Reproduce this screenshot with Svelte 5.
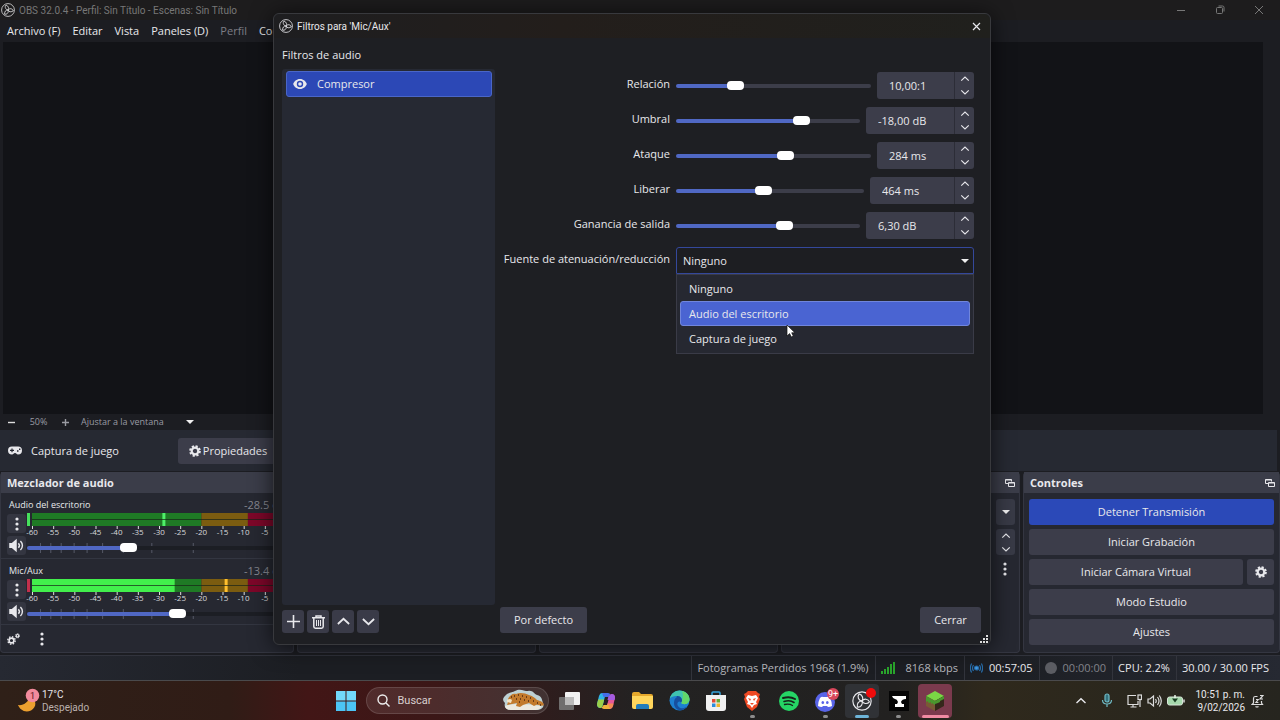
<script lang="ts">
	type Filter = { id: string; label: string; value: string; pos: number; spin: number };

	const menus = ['Archivo (F)', 'Editar', 'Vista', 'Paneles (D)', 'Perfil', 'Co'];

	let filters: Filter[] = $state([
		{ id: 'ratio', label: 'Relación', value: '10,00:1', pos: 28.7, spin: 97 },
		{ id: 'threshold', label: 'Umbral', value: '-18,00 dB', pos: 70, spin: 108 },
		{ id: 'attack', label: 'Ataque', value: '284 ms', pos: 56.7, spin: 97 },
		{ id: 'release', label: 'Liberar', value: '464 ms', pos: 46.3, spin: 104 },
		{ id: 'gain', label: 'Ganancia de salida', value: '6,30 dB', pos: 59.9, spin: 108 }
	]);

	const sources = ['Ninguno', 'Audio del escritorio', 'Captura de juego'];
	let hovered = $state(1);

	let channels = $state([
		{ name: 'Audio del escritorio', db: '-28.5 dB', level: -60, peak: -29.2, peakColor: '#4ff06a', clip: '#46e05c', volume: 38.3 },
		{ name: 'Mic/Aux', db: '-13.4 dB', level: -26.3, peak: -14.5, peakColor: '#ffc02e', clip: '#c2304c', volume: 58.5 }
	]);

	const marks = [-60, -55, -50, -45, -40, -35, -30, -25, -20, -15, -10, -5];
	const volumeMarks = [5, 9, 13, 18, 23, 29, 37, 48, 64];
	const pct = (db: number) => ((db + 60) / 60) * 100 + '%';
</script>

{#snippet obs(size: number)}
	<svg width={size} height={size} viewBox="0 0 24 24" fill="none" stroke="currentColor" stroke-width="1.400">
		<circle cx="12" cy="12" r="11" />
		{#each [0, 120, 240] as turn}
			<path transform="rotate({turn} 12 12)" d="M8.500 3.500C5.800 7 8 11.500 12 12c2-3.200.8-7-3.500-8.500" />
		{/each}
	</svg>
{/snippet}

{#snippet chevron(up: boolean, size: number, weight: number)}
	<svg width={size} height={size} viewBox="0 0 12 12" fill="none" stroke="currentColor" stroke-width={weight}>
		<path d={up ? 'M1.500 8 6 3.800 10.500 8' : 'M1.500 4 6 8.200 10.500 4'} />
	</svg>
{/snippet}

{#snippet gear(size: number)}
	<svg width={size} height={size} viewBox="0 0 16 16" fill="none" stroke="currentColor">
		<circle cx="8" cy="8" r="4.400" stroke-width="3" />
		<circle cx="8" cy="8" r="6.500" stroke-width="2.600" stroke-dasharray="2.900 2.205" />
	</svg>
{/snippet}

{#snippet kebab()}
	<svg width="4" height="14" viewBox="0 0 4 14" fill="currentColor">
		<circle cx="2" cy="2" r="1.600" /><circle cx="2" cy="7" r="1.600" /><circle cx="2" cy="12" r="1.600" />
	</svg>
{/snippet}

{#snippet popout()}
	<svg width="10" height="10" viewBox="0 0 10 10" fill="none" stroke="currentColor">
		<path d="M3 5.500H.5v-4h6v2M.5 2h6" /><path d="M3.500 4.500h6v4h-6zM3.500 5h6" />
	</svg>
{/snippet}

{#snippet speaker(size: number)}
	<svg width={size} height={size} viewBox="0 0 16 16" fill="none" stroke="currentColor" stroke-width="1.500">
		<path d="M1 6h2.500L7.500 2.500v11L3.500 10H1z" fill="currentColor" />
		<path d="M10 5.500c1.400 1.500 1.400 3.500 0 5M12.200 3.200c2.800 2.800 2.800 6.800 0 9.600" />
	</svg>
{/snippet}

<div class="desktop">
	<header class="titlebar">
		{@render obs(14)}
		<span>OBS 32.0.4 - Perfil: Sin Título - Escenas: Sin Título</span>
		<div class="window-buttons">
			<button aria-label="Minimizar"><svg width="10" height="10" stroke="currentColor"><path d="M1 5.500h8" /></svg></button>
			<button aria-label="Restaurar">
				<svg width="10" height="10" fill="none" stroke="currentColor"><rect x="1.500" y="2.500" width="6" height="6" rx="1" /><path d="M3.500 1h4q1.500 0 1.500 1.500v4" /></svg>
			</button>
			<button aria-label="Cerrar OBS"><svg width="10" height="10" stroke="currentColor"><path d="m1 1 8 8M9 1 1 9" /></svg></button>
		</div>
	</header>

	<nav class="menubar">
		{#each menus as menu}
			<button class:dim={menu === 'Perfil'}>{menu}</button>
		{/each}
	</nav>

	<main class="preview"><div class="canvas"></div></main>

	<div class="zoombar">
		<button aria-label="Alejar"><svg width="7" height="7" stroke="currentColor" stroke-width="1.400"><path d="M0 3.500h7" /></svg></button>
		<span class="zoom">50%</span>
		<button aria-label="Acercar"><svg width="7" height="7" stroke="currentColor" stroke-width="1.400"><path d="M0 3.500h7M3.500 0v7" /></svg></button>
		<button class="fit">Ajustar a la ventana <i class="caret"></i></button>
	</div>

	<section class="context">
		<svg width="14" height="9" viewBox="0 0 14 9" fill="currentColor">
			<path fill-rule="evenodd" d="M4 .5h6a4 4 0 0 1 0 8C8.500 8.500 8.500 7 7 7S5.500 8.500 4 8.500a4 4 0 0 1 0-8zM3.400 2.500v1.300H2v1.200h1.400v1.300h1.200V5H6V3.800H4.600V2.500zM9 4.200v1.500h1.500V4.200zM11 2.500V4h1.400V2.500z" />
		</svg>
		<span class="source">Captura de juego</span>
		<button class="btn properties">{@render gear(12)}Propiedades</button>
	</section>

	<div class="docks">
		<section class="dock mixer">
			<h2>Mezclador de audio</h2>
			{#each channels as channel}
				<div class="channel">
					<div class="channel-head"><span>{channel.name}</span><span class="db">{channel.db}</span></div>
					<div class="channel-body">
						<div class="channel-buttons">
							<button aria-label="Opciones de {channel.name}">{@render kebab()}</button>
							<button aria-label="Silenciar {channel.name}">{@render speaker(15)}</button>
						</div>
						<div class="levels">
							<div class="meter-row">
								<i class="clip" style="background: {channel.clip}"></i>
								<svg class="meter" aria-hidden="true">
									<rect width="66.700%" height="13" fill="#1f7a25" />
									<rect x="66.700%" width="18.300%" height="13" fill="#7b5c10" />
									<rect x="85%" width="15%" height="13" fill="#7d0729" />
									<rect width={pct(channel.level)} height="13" fill="#42ef4c" />
									<rect x={pct(channel.peak)} width="3" height="13" fill={channel.peakColor} />
									<path d="M0 6.500h400" stroke="#182419" opacity=".7" />
									{#each marks as mark}
										<rect x={pct(mark)} y="13" width="1" height="3" fill="#ddd" />
										<text x={pct(mark)} y="22" text-anchor="middle">{mark}</text>
									{/each}
								</svg>
							</div>
							<div class="volume">
								<svg class="volume-marks" aria-hidden="true">
									{#each volumeMarks as mark}
										<rect x="{mark}%" y="2" width="1" height="10" fill="#555967" />
									{/each}
								</svg>
								<input type="range" step="any" aria-label="Volumen de {channel.name}" bind:value={channel.volume} style="--fill: {channel.volume}%" />
							</div>
						</div>
					</div>
				</div>
			{/each}
			<div class="dock-tools">
				<button aria-label="Propiedades avanzadas de audio">
					<svg width="13" height="12" viewBox="0 0 13 12" fill="none" stroke="currentColor">
						<circle cx="4.500" cy="7.500" r="2.400" stroke-width="1.600" /><circle cx="4.500" cy="7.500" r="3.700" stroke-width="1.400" stroke-dasharray="1.500 1.400" />
						<circle cx="10.500" cy="2.800" r="1.300" stroke-width="1.200" /><circle cx="10.500" cy="2.800" r="2.100" stroke-dasharray=".9 .75" />
					</svg>
				</button>
				<button aria-label="Menú del mezclador">{@render kebab()}</button>
			</div>
		</section>
		<section class="dock"></section>
		<section class="dock"></section>
		<section class="dock transitions">
			<h2>{@render popout()}</h2>
			<div class="transition-tools">
				<button class="drop" aria-label="Transición"><i class="caret"></i></button>
				<div class="steps">
					<button aria-label="Más duración">{@render chevron(true, 10, 1.5)}</button>
					<button aria-label="Menos duración">{@render chevron(false, 10, 1.5)}</button>
				</div>
				<button class="plain" aria-label="Menú de transición">{@render kebab()}</button>
			</div>
		</section>
		<section class="dock controls">
			<h2>Controles {@render popout()}</h2>
			<div class="control-list">
				<button class="btn live">Detener Transmisión</button>
				<button class="btn">Iniciar Grabación</button>
				<div class="camera">
					<button class="btn">Iniciar Cámara Virtual</button>
					<button class="btn" aria-label="Configurar cámara virtual">{@render gear(12)}</button>
				</div>
				<button class="btn">Modo Estudio</button>
				<button class="btn">Ajustes</button>
			</div>
		</section>
	</div>

	<footer class="status">
		<span class="soft">Fotogramas Perdidos 1968 (1.9%)</span>
		<span class="soft kbps">
			<svg width="14" height="12" fill="#2aa52c"><path d="M0 9h2v3H0zM3 7h2v5H3zM6 5h2v7H6zM9 2h2v10H9zM12 0h2v12h-2z" /></svg>
			8168 kbps
		</span>
		<span>
			<svg width="13" height="12" viewBox="0 0 13 12" fill="none" stroke="#286ca8" stroke-width="1.200">
				<circle cx="6.500" cy="6" r="2" fill="#3f9ae6" /><path d="M3.500 3q-2 3 0 6M9.500 3q2 3 0 6M1.600 1.500q-2.400 4.500 0 9M11.400 1.500q2.400 4.500 0 9" />
			</svg>
			00:57:05
		</span>
		<span class="idle"><i></i>00:00:00</span>
		<span>CPU: 2.2%</span>
		<span>30.00 / 30.00 FPS</span>
	</footer>

	<div class="taskbar">
		<button class="weather">
			<svg width="23" height="26" viewBox="0 0 23 26">
				<path d="M1 17c5 1 11-3 12-9 7 4 7 11 1 14.500C8 25 3 22 1 17z" fill="#eda02f" />
				<circle cx="15.500" cy="7.500" r="6.800" fill="#f28a9c" />
				<text x="15.500" y="11" text-anchor="middle" font-size="9" fill="#5a1520">1</text>
			</svg>
			<span>17°C<br /><small>Despejado</small></span>
		</button>

		<div class="apps">
			<button aria-label="Inicio">
				<svg width="20" height="20" fill="#4cc4f5"><path d="M0 0h9.500v9.500H0zM10.500 0H20v9.500h-9.500z" fill="#72d8fb" /><path d="M0 10.500h9.500V20H0zM10.500 10.500H20V20h-9.500z" /></svg>
			</button>
			<label class="search">
				<svg width="13" height="13" fill="none" stroke="#eee" stroke-width="1.400"><circle cx="5.500" cy="5.500" r="4.500" /><path d="m9 9 3.500 3.500" /></svg>
				<input type="text" placeholder="Buscar" aria-label="Buscar" />
				<svg width="43" height="23" viewBox="0 0 43 23">
					<path d="M3 7c3-4 7-3 10-5 5-3 9 0 13 0 5-1 6 3 9 4 5 1 5 5 6 8 2 5-3 7-7 7H9c-6 0-7-4-6-7-3-3-2-5 0-7z" fill="#bdd1d4" />
					<path d="M3 17c10-3 20-2 36 0 0 3-3 4-7 4H9c-4 0-6-2-6-4z" fill="#ece9df" />
					<path d="M6 10c2-4 5-6 8-5 4-2 9-1 13 1 4 1 6 3 8 5 3 1 6 1 7 5-3 2-5-1-8 0l-2 1-5-3-6 2-3 2-4-1 1-3-5 1-5 1 1-3z" fill="#c27a2c" />
					<path d="M5 11q3-2 5 0l-1 3-4-1z" fill="#f2e2c4" />
					<path d="M12 7h1M16 6h1M20 7h1M24 8h1M28 9h1M14 10h1M18 10h1M22 11h1M26 12h1M31 12h1M9 8h1M35 14h1M17 13h1M38 16h1" stroke="#4d2912" stroke-width="1.300" />
				</svg>
			</label>
			<div class="pinned">
				<button aria-label="Vista de tareas">
					<svg width="21" height="20"><rect x="6" y="1" width="15" height="13" rx="1" fill="#f2f2f2" /><rect y="6" width="15" height="13" rx="1" fill="#777" opacity=".9" /><path d="M6 6h9v8H6z" fill="#bbb" /></svg>
				</button>
				<button aria-label="Copilot">
					<svg width="20" height="18" viewBox="0 0 20 18">
						<path d="M6 1h6q-2 0-2.600 2L6.500 14q-.6 2-2 2Q1 16 1 12L3 4q.8-3 3-3z" fill="#2eb3e8" />
						<path d="M2.200 7.500h6l-1.700 6.500q-.6 2-2 2Q1 16 1 12z" fill="#9bd048" />
						<path d="M14 17H8q2 0 2.600-2l2.900-11q.6-2 2-2Q19 2 19 6l-2 8q-.8 3-3 3z" fill="#e5589a" />
						<path d="M11.500 11.500h6L17 14q-.8 3-3 3H8q2 0 2.600-2z" fill="#f58a54" />
						<path d="M6 1h6q2 0 2.500 2-1.500 0-2 2h-5z" fill="#456de8" />
						<path d="M14 17H8q-2 0-2.500-2 1.500 0 2-2h5z" fill="#f0b23c" />
						<path d="m12.500 4 3-2Q19 2 19 6l-.5 2h-7z" fill="#a35be0" />
					</svg>
				</button>
				<button aria-label="Explorador de archivos">
					<svg width="21" height="19"><path d="M0 3q0-2 2-2h5l2 2h10q2 0 2 2v4H0z" fill="#e5a82c" /><path d="M0 5h21v11q0 2-2 2H2q-2 0-2-2z" fill="#ffd65c" /><path d="M4 18v-3q0-2 2-2h9q2 0 2 2v3z" fill="#237dbb" /></svg>
				</button>
				<button aria-label="Edge">
					<svg width="21" height="21" viewBox="0 0 21 21">
						<circle cx="10.500" cy="10.500" r="10" fill="#1d7fd0" />
						<path d="M.8 8.500C2 3.500 6 .5 10.500.5c6 0 10 4.200 10 8.500 0 3.500-2.500 5.200-5 5.200-2 0-3.300-.8-3.300-1.500 0-.6.800-1 .8-2.500C13 7.500 10.500 6 7.500 6 4.500 6 2 7 .8 8.500z" fill="#3fc4b0" />
						<path d="M13 1q7 2 7.500 8c0 3.500-2.500 5.200-5 5.200-2 0-3.300-.8-3.300-1.500 0-.6.800-1 .8-2.500q2-5 0-9.200z" fill="#62d66a" />
						<path d="M7.500 6c3 0 5.500 1.500 5.500 4.200 0 1.500-.8 1.900-.8 2.500-2-2.700-5.200 0-3.200 3.300 2 3 5.500 3 9 .5-4 6-13 4.500-13-3.500C5 10 6 8 8 7z" fill="#174f9e" />
					</svg>
				</button>
				<button aria-label="Microsoft Store">
					<svg width="20" height="20"><path d="M6 5V2q0-1 1-1h6q1 0 1 1v3" fill="none" stroke="#36a4dd" stroke-width="1.500" /><path d="M0 4h20v13q0 3-3 3H3q-3 0-3-3z" fill="#f1f1f1" /><path d="M6 8h3.500v3.500H6z" fill="#e34b35" /><path d="M10.500 8H14v3.500h-3.500z" fill="#65aa35" /><path d="M6 12.500h3.500V16H6z" fill="#2c8cdc" /><path d="M10.500 12.500H14V16h-3.500z" fill="#f0b52c" /></svg>
				</button>
				<button class="running" aria-label="Brave">
					<svg width="18" height="20" viewBox="0 0 18 20"><path d="m5 0-2 2-2 1 1 3-1 2 3 8 5 4 5-4 3-8-1-2 1-3-2-1-2-2z" fill="#ef4a24" /><path d="m5 4 4 1 4-1 2 3-2 4 1 2-3 1-2 3-2-3-3-1 1-2-2-4z" fill="#fff" /><path d="m5 7 3 1-1 2zM13 7l-3 1 1 2zM7 12h4l-2 2z" fill="#ef4a24" /></svg>
				</button>
				<button aria-label="Spotify">
					<svg width="20" height="20" fill="none" stroke="#17221a" stroke-linecap="round"><circle cx="10" cy="10" r="10" fill="#25d565" stroke="none" /><path d="M4 7q7-2 12 1" stroke-width="2" /><path d="M5 10.500q6-2 10 1" stroke-width="1.600" /><path d="M5.500 13.500q5-1 8 1" stroke-width="1.300" /></svg>
				</button>
				<button class="running" aria-label="Discord">
					<svg width="24" height="24" viewBox="0 0 24 24" overflow="visible"><circle cx="11" cy="13" r="10" fill="#5864e8" /><path d="M6 9q2-2 3-1h4q1-1 3 1 2 4 2 8-2 1-4 1l-1-1H9l-1 1q-2 0-4-1 0-4 2-8z" fill="#fff" /><ellipse cx="8.800" cy="13.500" rx="1.300" ry="1.500" fill="#5864e8" /><ellipse cx="13.300" cy="13.500" rx="1.300" ry="1.500" fill="#5864e8" /><circle cx="19" cy="5" r="6" fill="#d9485c" /><text x="19" y="8" text-anchor="middle" font-size="9" fill="#fff">9+</text></svg>
				</button>
				<button class="running current" aria-label="OBS Studio">
					{@render obs(20)}<i class="rec"></i>
				</button>
				<button class="running" aria-label="Forja">
					<svg width="20" height="20"><path d="M0 0h20v20H0z" fill="#050505" /><path d="M3 5h14v3q-4 0-5 3l1 2h2v3H6v-3h2l1-2Q8 8 6 8 4 8 3 5z" fill="#fff" /></svg>
				</button>
				<button class="running game" aria-label="Minecraft">
					<svg width="20" height="20"><path d="m10 0 9 5-9 5-9-5z" fill="#7ad645" /><path d="m1 5 9 5v10l-9-5z" fill="#7a5935" /><path d="m19 5-9 5v10l9-5z" fill="#35271b" /><path d="m1 5 9 5v4l-2-1v-1l-2 1v-2l-2 1-1-1v-1l-2 1zM19 5l-9 5v3l3-1 2-1v-1l4-2z" fill="#4a972d" /></svg>
				</button>
			</div>
		</div>

		<div class="tray">
			<button aria-label="Iconos ocultos">{@render chevron(true, 12, 1.4)}</button>
			<button class="mic" aria-label="Micrófono">
				<svg width="12" height="15" fill="none" stroke="#6fb9c4" stroke-width="1.200"><rect x="4" y="1" width="4" height="8" rx="2" fill="#34717d" /><path d="M1.500 7q0 4 4.500 4t4.500-4M6 11v3" /></svg>
			</button>
			<button class="quick" aria-label="Red, volumen y batería">
				<svg width="15" height="14" fill="none" stroke="#ddd" stroke-width="1.200"><path d="M9 1.500H1v9h10V7M3.500 13h6M6 10.500V13M13 6v7" /><rect x="11" y="1" width="3.500" height="4.500" /></svg>
				<svg width="15" height="14" viewBox="0 0 15 14" fill="none" stroke="#ddd" stroke-width="1.200"><path d="M1 5h2l3.500-3v10L3 9H1zM8.500 5q1.500 2 0 4M10.500 3q3 4 0 8M12.300 1.500q4 5.500 0 11" /></svg>
				<svg width="18" height="14"><rect x=".5" y="3" width="15" height="8" rx="2" fill="#a6d8ac" stroke="#d8e6d8" /><path d="M17 5.500v3" stroke="#ddd" stroke-width="1.500" /><path d="M8 1v4" stroke="#e9f5e9" stroke-width="1.500" /><path d="M5 4.500h6L8 8.500z" fill="#173d20" /></svg>
			</button>
			<button class="clock">10:51 p. m.<br />9/02/2026</button>
			<button aria-label="Notificaciones">
				<svg width="13" height="14" fill="none" stroke="#ddd" stroke-width="1.200"><path d="M6.500 2.500H4q-1.500 0-1.500 2V9L1 10.500h10.500L10.500 9V7M4.500 12.500q1.500 1 3 0M5 5.500h2.200L5 8.500h2.400M9 1.500h3L9 5h3" /></svg>
			</button>
		</div>
	</div>

	<div class="dialog" role="dialog" aria-label="Filtros para 'Mic/Aux'">
		<div class="dialog-title">
			{@render obs(14)}
			<span>Filtros para 'Mic/Aux'</span>
			<button aria-label="Cerrar ventana"><svg width="9" height="9" stroke="currentColor" stroke-width="1.200"><path d="m1 1 7 7M8 1 1 8" /></svg></button>
		</div>
		<div class="dialog-body">
			<aside>
				<h3>Filtros de audio</h3>
				<ul class="filter-list">
					<li>
						<svg width="14" height="12" viewBox="0 0 14 12" fill="currentColor"><path fill-rule="evenodd" d="M7 1c3.500 0 6 2.500 6.800 5C13 8.500 10.500 11 7 11S1 8.500.2 6C1 3.500 3.500 1 7 1zm0 1.800a3.200 3.200 0 1 0 0 6.400 3.200 3.200 0 0 0 0-6.400z" /><circle cx="7" cy="6" r="1.800" /></svg>
						Compresor
					</li>
				</ul>
				<div class="list-tools">
					<button aria-label="Añadir"><svg width="13" height="13" stroke="currentColor" stroke-width="1.600"><path d="M0 6.500h13M6.500 0v13" /></svg></button>
					<button aria-label="Eliminar">
						<svg width="13" height="14" fill="none" stroke="currentColor" stroke-width="1.500"><path d="M0 2.800h13M4 2.500V1h5v1.500M1.800 3v8.500q0 1.700 1.700 1.700h6q1.700 0 1.700-1.700V3" /><path d="M4.500 5v6M6.500 5v6M8.500 5v6" stroke-width="1" /></svg>
					</button>
					<button aria-label="Subir">{@render chevron(true, 15, 1.4)}</button>
					<button aria-label="Bajar">{@render chevron(false, 15, 1.4)}</button>
				</div>
			</aside>

			<div class="panel">
				<form>
					{#each filters as filter}
						<label for={filter.id}>{filter.label}</label>
						<div class="field">
							<input id={filter.id} type="range" step="any" bind:value={filter.pos} style="--fill: {filter.pos}%" />
							<div class="spin" style="width: {filter.spin}px">
								<input type="text" aria-label="Valor de {filter.label}" bind:value={filter.value} />
								<div class="arrows">
									<button type="button" aria-label="Aumentar">{@render chevron(true, 10, 1.4)}</button>
									<button type="button" aria-label="Disminuir">{@render chevron(false, 10, 1.4)}</button>
								</div>
							</div>
						</div>
					{/each}
					<label for="sidechain">Fuente de atenuación/reducción</label>
					<div class="combo">
						<select id="sidechain">
							{#each sources as source}<option>{source}</option>{/each}
						</select>
						<i class="caret"></i>
						<ul class="popup" role="listbox">
							{#each sources as source, i}
								<li role="option" aria-selected={hovered === i} class:hovered={hovered === i} onmouseenter={() => (hovered = i)}>{source}</li>
							{/each}
						</ul>
						<svg class="cursor" width="10" height="14" fill="#fff" stroke="#111" stroke-width=".7"><path d="M1 1v11l2.600-2.400L5.300 13l2-.9-1.600-3.300H9z" /></svg>
					</div>
				</form>
				<div class="actions">
					<button class="btn">Por defecto</button>
					<button class="btn close">Cerrar</button>
				</div>
			</div>
		</div>
		<svg class="grip" width="8" height="8" fill="#ddd"><path d="M6 0h2v2H6zM3 3h2v2H3zM6 3h2v2H6zM0 6h2v2H0zM3 6h2v2H3zM6 6h2v2H6z" /></svg>
	</div>
</div>

<style>
	:global(body) {
		margin: 0;
		background: #1c1d22;
	}

	.desktop {
		position: relative;
		display: flex;
		flex-direction: column;
		height: 100vh;
		overflow: hidden;
		color: #e8e8ec;
		background: #1c1d22;
		font: 11px/16px 'Open Sans', 'Noto Sans', sans-serif;
	}

	.desktop * {
		box-sizing: border-box;
	}

	button,
	input,
	select {
		margin: 0;
		padding: 0;
		border: 0;
		color: inherit;
		background: none;
		font: inherit;
	}

	button {
		display: flex;
		align-items: center;
		justify-content: center;
		white-space: nowrap;
	}

	svg {
		flex: none;
		display: block;
	}

	h2,
	h3,
	ul {
		margin: 0;
		padding: 0;
		list-style: none;
		font-size: 11px;
	}

	.titlebar {
		display: flex;
		align-items: center;
		gap: 4px;
		height: 20px;
		padding: 0 5px 0 1px;
		background: #1d1c1d;
		font: 10px Roboto, sans-serif;
		color: #777;
	}

	.titlebar > svg {
		color: #ddd;
	}

	.window-buttons {
		display: flex;
		gap: 7px;
		margin-left: auto;
	}

	.window-buttons button {
		width: 32px;
	}

	.menubar {
		display: flex;
		gap: 12px;
		height: 22px;
		padding-left: 7px;
	}

	.menubar .dim {
		color: #7c7d86;
	}

	.preview {
		flex: 1;
		display: flex;
		min-height: 0;
		padding: 0 17px 0 3px;
	}

	.canvas {
		flex: 1;
		background: #121317;
	}

	.zoombar {
		display: flex;
		align-items: center;
		height: 16px;
		padding-left: 8px;
		color: #9a9ba2;
		font-size: 9px;
	}

	.zoombar button:first-child {
		color: #ddd;
	}

	.zoom {
		width: 47px;
		text-align: center;
	}

	.fit {
		gap: 22px;
		margin-left: 12px;
	}

	.caret {
		border: 4px solid transparent;
		border-top-color: #f0f0f0;
		border-bottom: 0;
	}

	.context {
		display: flex;
		align-items: center;
		height: 41px;
		margin: 0 3px 0 0;
		padding-left: 8px;
		background: #262932;
	}

	.source {
		width: 156px;
		padding-left: 9px;
	}

	.btn {
		gap: 2px;
		height: 26px;
		border-radius: 3px;
		background: #3c3d4a;
	}

	.properties {
		width: 100px;
	}

	.docks {
		display: flex;
		gap: 3px;
		height: 181px;
		margin-top: 1px;
	}

	.dock {
		flex: 1;
		border: 1px solid #343641;
		border-top: 0;
		border-radius: 4px;
		background: #262831;
	}

	.dock h2 {
		display: flex;
		align-items: center;
		justify-content: space-between;
		height: 21px;
		padding: 0 4px 0 6px;
		background: #3b3d49;
	}

	.dock.mixer {
		flex: none;
		display: flex;
		flex-direction: column;
		width: 294px;
	}

	.channel {
		height: 66px;
		padding: 4px 7px 0 6px;
		border-bottom: 1px solid #333641;
	}

	.channel-head {
		display: flex;
		justify-content: space-between;
		padding-left: 2px;
		font-size: 9px;
	}

	.channel-head .db {
		font-size: 11px;
		color: #85868f;
	}

	.channel-body {
		display: flex;
		gap: 1px;
	}

	.channel-buttons {
		display: flex;
		flex-direction: column;
		gap: 3px;
		padding-top: 1px;
	}

	.channel-buttons button {
		width: 19px;
		height: 19px;
		border-radius: 3px;
		background: #343641;
	}

	.levels {
		flex: 1;
	}

	.meter-row {
		display: flex;
		gap: 2px;
	}

	.clip {
		width: 3px;
		height: 13px;
	}

	.meter {
		flex: 1;
		width: 0;
		height: 25px;
		overflow: visible;
	}

	.meter text {
		fill: #d8d8dc;
		font-size: 8px;
	}

	.volume {
		position: relative;
		display: flex;
		height: 20px;
		align-items: center;
	}

	.volume-marks {
		position: absolute;
		width: 100%;
		height: 14px;
	}

	.volume input {
		position: relative;
		width: 100%;
	}

	input[type='range'] {
		flex: 1;
		min-width: 0;
		height: 10px;
		appearance: none;
	}

	input[type='range']::-webkit-slider-runnable-track {
		height: 4px;
		border-radius: 2px;
		background: linear-gradient(90deg, #5068c4 var(--fill), #3c3d49 var(--fill));
	}

	.volume input::-webkit-slider-runnable-track {
		background: linear-gradient(90deg, #5068c4 var(--fill), #1c1e24 var(--fill));
	}

	input[type='range']::-webkit-slider-thumb {
		appearance: none;
		width: 17px;
		height: 9px;
		margin-top: -3px;
		border-radius: 4px;
		background: #fff;
	}

	.dock-tools {
		display: flex;
		gap: 20px;
		flex: 1;
		padding-left: 6px;
	}

	.transitions h2 {
		justify-content: flex-end;
	}

	.transition-tools {
		display: flex;
		flex-direction: column;
		align-items: flex-end;
		gap: 4px;
		padding: 6px 4px;
	}

	.drop,
	.steps {
		width: 19px;
		height: 26px;
		border-radius: 3px;
		background: #383a46;
	}

	.steps button {
		width: 100%;
		height: 13px;
	}

	.plain {
		width: 20px;
		height: 20px;
	}

	.dock.controls {
		flex: none;
		width: 257px;
	}

	.control-list {
		display: flex;
		flex-direction: column;
		gap: 4px;
		padding: 6px 5px;
	}

	.live {
		background: #2b49b8;
	}

	.camera {
		display: flex;
		gap: 4px;
	}

	.camera .btn:first-child {
		flex: 1;
	}

	.camera .btn:last-child {
		width: 27px;
	}

	.status {
		display: flex;
		justify-content: flex-end;
		align-items: center;
		height: 25px;
		margin-top: 2px;
		padding-right: 5px;
		border-top: 1px solid #31333c;
		background: linear-gradient(90deg, #262932, #1c1e23 300px, #1c1e23 990px, #262932);
	}

	.status span {
		display: flex;
		align-items: center;
		gap: 6px;
		height: 24px;
		padding: 0 6px 0 5px;
		border-left: 1px solid #32343c;
	}

	.status .soft {
		color: #b6b7bd;
	}

	.status .kbps {
		gap: 11px;
	}

	.status .idle {
		color: #82838a;
	}

	.idle i {
		width: 12px;
		height: 12px;
		border-radius: 50%;
		background: #5b5c62;
	}

	.taskbar {
		display: grid;
		grid-template-columns: 1fr auto 1fr;
		align-items: center;
		height: 40px;
		border-top: 1px solid #4a4a4c;
		background: linear-gradient(90deg, #2f2018, #301c16 18%, #421616 24%, #3b1717 34%, #232222 50%, #222120 70%, #2f291c 77%, #26251f);
		font: 10px/13px Roboto, sans-serif;
	}

	.weather {
		justify-self: start;
		gap: 2px;
		padding-left: 17px;
		text-align: left;
	}

	.weather small {
		font-size: 10px;
		color: #bbb1ad;
	}

	.apps {
		display: flex;
		align-items: center;
		margin-left: 2px;
	}

	.apps > button {
		width: 32px;
	}

	.search {
		display: flex;
		align-items: center;
		gap: 8px;
		width: 183px;
		height: 27px;
		margin: 0 4px;
		padding: 0 3px 0 10px;
		border: 1px solid #ffffff20;
		border-radius: 14px;
		background: #ffffff18;
	}

	.search input {
		flex: 1;
		min-width: 0;
		font-size: 11px;
	}

	.search input::placeholder {
		color: #d9cfcf;
		opacity: 1;
	}

	.pinned {
		display: flex;
		justify-content: space-between;
		width: 400px;
	}

	.pinned button {
		position: relative;
		width: 34px;
		height: 34px;
		border-radius: 4px;
	}

	.running::after {
		content: '';
		position: absolute;
		bottom: 0;
		width: 5px;
		height: 3px;
		border-radius: 2px;
		background: #8c8c8c;
	}

	.pinned .current {
		background: #303236;
	}

	.current::after {
		width: 14px;
		background: #6db4d8;
	}

	.pinned .game {
		background: #7b3a4d;
	}

	.game::after {
		width: 27px;
		background: #f08ba3;
	}

	.rec {
		position: absolute;
		top: 4px;
		right: 3px;
		width: 10px;
		height: 10px;
		border-radius: 50%;
		background: #f00c0c;
	}

	.tray {
		display: flex;
		align-items: center;
		justify-self: end;
		gap: 14px;
		padding-right: 16px;
	}

	.quick {
		gap: 5px;
	}

	.clock {
		margin: 0 -8px 0 -4px;
		text-align: right;
	}

	.dialog {
		position: absolute;
		inset: 13px 289px 75px 273px;
		display: flex;
		flex-direction: column;
		border: 1px solid #38393d;
		border-radius: 6px;
		background: #1e1f23;
		box-shadow: 0 2px 22px #000a;
	}

	.dialog-title {
		display: flex;
		align-items: center;
		gap: 4px;
		height: 24px;
		padding: 0 4px 0 5px;
		border-radius: 6px 6px 0 0;
		background: linear-gradient(90deg, #1e1e20, #231e1b 40%, #20201d);
		font: 10px Roboto, sans-serif;
	}

	.dialog-title button {
		width: 20px;
		height: 20px;
		margin-left: auto;
	}

	.dialog-body {
		flex: 1;
		display: flex;
		gap: 5px;
		min-height: 0;
		padding: 9px 9px 11px 8px;
	}

	aside {
		display: flex;
		flex-direction: column;
		width: 213px;
	}

	h3 {
		height: 22px;
		font-weight: 400;
		line-height: 16px;
	}

	.filter-list {
		flex: 1;
		padding: 2px 3px 2px 4px;
		border-radius: 3px;
		background: #262933;
	}

	.filter-list li {
		display: flex;
		align-items: center;
		gap: 10px;
		height: 26px;
		padding-left: 6px;
		border: 1px solid #4a66c8;
		border-radius: 3px;
		background: #2c48b6;
	}

	.list-tools {
		display: flex;
		gap: 3px;
		padding-top: 5px;
	}

	.list-tools button {
		width: 22px;
		height: 23px;
		border-radius: 3px;
		background: #3a3b48;
	}

	.panel {
		flex: 1;
		display: flex;
		flex-direction: column;
		justify-content: space-between;
		padding-top: 24px;
	}

	form {
		display: grid;
		grid-template-columns: 170px 1fr;
		align-items: center;
		gap: 8px 6px;
		padding: 1px 7px 0 0;
	}

	form label {
		padding-bottom: 3px;
		text-align: right;
		white-space: nowrap;
	}

	.field {
		display: flex;
		align-items: center;
		gap: 6px;
		min-width: 0;
	}

	.spin {
		display: flex;
		height: 27px;
		border-radius: 3px;
		background: #3c3d4a;
	}

	.spin input {
		flex: 1;
		min-width: 0;
		padding-left: 12px;
	}

	.arrows {
		width: 20px;
		border-left: 1px solid #2c2d37;
	}

	.arrows button {
		width: 100%;
		height: 13px;
	}

	.combo {
		position: relative;
		display: flex;
		align-items: center;
	}

	.combo select {
		width: 100%;
		height: 27px;
		padding: 0 6px;
		appearance: none;
		border: 1px solid #34489b;
		border-radius: 3px 3px 0 0;
		background: #1d1e22;
	}

	.combo .caret {
		position: absolute;
		right: 5px;
		pointer-events: none;
	}

	.popup {
		position: absolute;
		top: 27px;
		left: 0;
		right: 0;
		padding: 1px 3px 2px;
		border: 1px solid #3a3b47;
		background: #262831;
	}

	.popup li {
		height: 25px;
		padding: 0 8px;
		border: 1px solid transparent;
		border-radius: 3px;
		line-height: 23px;
	}

	.popup .hovered {
		border-color: #7186dc;
		background: #4a64d2;
	}

	.cursor {
		position: absolute;
		top: 77px;
		left: 110px;
	}

	.actions {
		display: flex;
		justify-content: space-between;
	}

	.actions .btn {
		min-width: 87px;
	}

	.actions .close {
		min-width: 61px;
	}

	.grip {
		position: absolute;
		right: 2px;
		bottom: 1px;
	}
</style>
